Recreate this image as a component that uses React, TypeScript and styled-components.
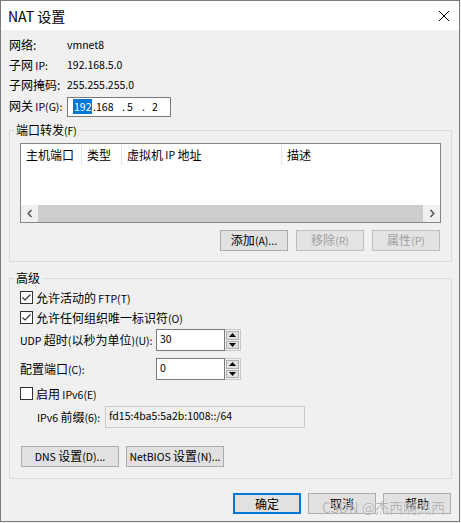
import React from "react";
import styled, { createGlobalStyle, css } from "styled-components";

const GlobalStyle = createGlobalStyle`
  html, body {
    margin: 0;
    padding: 0;
    background: #f0f0f0;
  }
  body {
    font-family: "Noto Sans CJK SC", "Noto Sans", sans-serif;
    font-size: 12px;
    color: #000;
  }
`;

/** latin runs render smaller than the CJK glyphs, like the dialog font does */
const Lat = styled.span`
  font-size: 10.5px;
`;

const LATIN = /^[\u0000-\u02ff]+$/;

const Mixed = ({ text }: { text: string }) => (
  <>
    {text
      .split(/([\u0000-\u02ff]+)/)
      .filter(Boolean)
      .map((part, i) =>
        LATIN.test(part) ? <Lat key={i}>{part}</Lat> : <React.Fragment key={i}>{part}</React.Fragment>
      )}
  </>
);

/** window frame */
const Window = styled.div`
  position: relative;
  width: 460px;
  height: 522px;
  box-sizing: border-box;
  border: 1px solid #7a7a7a;
  background: #f0f0f0;
  display: flex;
  flex-direction: column;
  overflow: hidden;
`;

const TitleBar = styled.div`
  height: 29px;
  flex: none;
  background: #fff;
  display: flex;
  align-items: center;
  justify-content: space-between;
  padding: 0 10px 0 7px;
`;

const TitleText = styled.span`
  font-size: 14px;
  line-height: 1;
`;

const Body = styled.div`
  display: flex;
  flex-direction: column;
  padding: 0 7px 0 8px;
`;

/** info rows */
const InfoList = styled.div`
  display: flex;
  flex-direction: column;
  padding-top: 5px;
`;

const Row = styled.div<{ $h?: number; $mt?: number }>`
  display: flex;
  align-items: center;
  height: ${(p) => p.$h ?? 20}px;
  margin-top: ${(p) => p.$mt ?? 0}px;
  white-space: nowrap;
`;

const Label = styled.span<{ $w: number; $pl?: number }>`
  width: ${(p) => p.$w}px;
  padding-left: ${(p) => p.$pl ?? 0}px;
  box-sizing: border-box;
  flex: none;
  line-height: 16px;
`;

const Value = styled.span`
  font-size: 10.5px;
  line-height: 16px;
`;

const IpBox = styled.div`
  width: 104px;
  height: 20px;
  box-sizing: border-box;
  border: 1px solid #7a7a7a;
  background: #fff;
  display: flex;
  align-items: center;
  padding-left: 6px;
  font-size: 10.5px;
  line-height: 14px;
`;

const IpCell = styled.span<{ $w?: number }>`
  ${(p) => (p.$w ? `width: ${p.$w}px; flex: none;` : "flex: 1;")}
`;

const Selected = styled.span`
  background: #0078d7;
  color: #fff;
  padding: 0 1px;
  margin-left: -1px;
`;

/** group boxes */
const Group = styled.fieldset<{ $mt: number }>`
  margin: ${(p) => p.$mt}px 0 0 0;
  padding: 0;
  border: 1px solid #dcdcdc;
  min-width: 0;
`;

const Legend = styled.legend`
  margin-left: 4px;
  padding: 0 2px;
  line-height: 16px;
`;

const GroupBody = styled.div<{ $pt: number; $pb: number }>`
  display: flex;
  flex-direction: column;
  padding: ${(p) => p.$pt}px 10px ${(p) => p.$pb}px 10px;
`;

/** list view */
const ListView = styled.div`
  height: 80px;
  box-sizing: border-box;
  border: 1px solid #828790;
  background: #fff;
  display: flex;
  flex-direction: column;
`;

const Header = styled.div`
  height: 21px;
  display: flex;
`;

const HeaderCell = styled.div<{ $w?: number }>`
  ${(p) => (p.$w ? `width: ${p.$w}px; flex: none;` : "flex: 1;")}
  box-sizing: border-box;
  padding-left: 5px;
  display: flex;
  align-items: center;
  white-space: pre;
  border-right: ${(p) => (p.$w ? "1px solid #e5e5e5" : "none")};
`;

const ListSpace = styled.div`
  flex: 1;
`;

const HScroll = styled.div`
  height: 17px;
  display: flex;
  background: #f0f0f0;
`;

const ScrollArrow = styled.div`
  width: 17px;
  flex: none;
  display: flex;
  align-items: center;
  justify-content: center;
`;

const ScrollThumb = styled.div`
  flex: 1;
  background: #cdcdcd;
`;

/** buttons */
const ButtonRow = styled.div<{ $mt: number; $justify?: string; $gap: number }>`
  display: flex;
  justify-content: ${(p) => p.$justify ?? "flex-end"};
  gap: ${(p) => p.$gap}px;
  margin-top: ${(p) => p.$mt}px;
  padding: 0 1px;
`;

const Button = styled.button<{ $w: number; $default?: boolean }>`
  width: ${(p) => p.$w}px;
  height: 21px;
  box-sizing: border-box;
  padding: 0;
  font: inherit;
  line-height: 16px;
  white-space: pre;
  color: #000;
  background: #e1e1e1;
  border: 1px solid #adadad;
  ${(p) =>
    p.$default &&
    css`
      border-color: #0078d7;
      box-shadow: inset 0 0 0 1px #0078d7;
    `}
  &:disabled {
    color: #a0a0a0;
    background: #e3e3e3;
    border-color: #bfbfbf;
  }
`;

/** checkboxes */
const CheckRow = styled.div<{ $mt?: number }>`
  display: flex;
  align-items: center;
  gap: 3px;
  height: 20px;
  white-space: pre;
  margin-top: ${(p) => p.$mt ?? 0}px;
`;

const Box = styled.span`
  width: 13px;
  height: 13px;
  box-sizing: border-box;
  border: 1px solid #333;
  background: #fff;
  display: flex;
  align-items: center;
  justify-content: center;
  flex: none;
`;

const CheckBox = ({ checked, label, mt }: { checked?: boolean; label: string; mt?: number }) => (
  <CheckRow $mt={mt}>
    <Box>
      {checked && (
        <svg width="11" height="11" viewBox="0 0 11 11">
          <path d="M1.5 5.5 L4 8 L9.5 2.5" fill="none" stroke="#333" strokeWidth="1.2" />
        </svg>
      )}
    </Box>
    <span>
      <Mixed text={label} />
    </span>
  </CheckRow>
);

/** spin + text fields */
const TextBox = styled.div<{ $w: number; $disabled?: boolean }>`
  width: ${(p) => p.$w}px;
  height: 100%;
  box-sizing: border-box;
  border: 1px solid ${(p) => (p.$disabled ? "#cccccc" : "#7a7a7a")};
  background: ${(p) => (p.$disabled ? "#f0f0f0" : "#fff")};
  padding: 2px 0 0 3px;
  font-size: 10.5px;
  line-height: 14px;
`;

const Spin = styled.div`
  width: 16px;
  height: 100%;
  box-sizing: border-box;
  border: 1px solid #c8c8c8;
  border-left: none;
  display: flex;
  flex-direction: column;
  gap: 1px;
  padding: 1px;
  background: #f0f0f0;
`;

const SpinHalf = styled.div`
  flex: 1;
  background: #e1e1e1;
  border: 1px solid #adadad;
  display: flex;
  align-items: center;
  justify-content: center;
`;

const SpinField = ({ value }: { value: string }) => (
  <>
    <TextBox $w={69}>{value}</TextBox>
    <Spin>
      <SpinHalf>
        <svg width="7" height="4" viewBox="0 0 7 4">
          <path d="M0 4 L3.5 0 L7 4 Z" fill="#000" />
        </svg>
      </SpinHalf>
      <SpinHalf>
        <svg width="7" height="4" viewBox="0 0 7 4">
          <path d="M0 0 L3.5 4 L7 0 Z" fill="#000" />
        </svg>
      </SpinHalf>
    </Spin>
  </>
);

const Watermark = styled.div`
  position: absolute;
  right: 14px;
  bottom: 5px;
  font-size: 14px;
  line-height: 18px;
  color: rgba(120, 120, 120, 0.55);
  text-shadow: 0 0 1px #fff;
  pointer-events: none;
`;

const App = () => {
  return (
    <>
      <GlobalStyle />
      <Window>
        <TitleBar>
          <TitleText>NAT 设置</TitleText>
          <svg width="10" height="10" viewBox="0 0 10 10">
            <path d="M0 0 L10 10 M10 0 L0 10" stroke="#000" strokeWidth="1" />
          </svg>
        </TitleBar>
        <Body>
          <InfoList>
            <Row>
              <Label $w={58}>网络:</Label>
              <Value>vmnet8</Value>
            </Row>
            <Row>
              <Label $w={58}>
                <Mixed text="子网 IP:" />
              </Label>
              <Value>192.168.5.0</Value>
            </Row>
            <Row>
              <Label $w={58}>子网掩码:</Label>
              <Value>255.255.255.0</Value>
            </Row>
            <Row $h={21} $mt={1}>
              <Label $w={58}>
                <Mixed text="网关 IP(G):" />
              </Label>
              <IpBox>
                <IpCell $w={19}>
                  <Selected>192</Selected>
                </IpCell>
                <IpCell $w={3}>.</IpCell>
                <IpCell $w={26}>168</IpCell>
                <IpCell $w={5}>.</IpCell>
                <IpCell $w={15}>5</IpCell>
                <IpCell $w={10}>.</IpCell>
                <IpCell>2</IpCell>
              </IpBox>
            </Row>
          </InfoList>

          <Group $mt={5}>
            <Legend>
              <Mixed text="端口转发(F)" />
            </Legend>
            <GroupBody $pt={4} $pb={10}>
              <ListView>
                <Header>
                  <HeaderCell $w={61}>主机端口</HeaderCell>
                  <HeaderCell $w={40}>类型</HeaderCell>
                  <HeaderCell $w={160}>
                    <Mixed text="虚拟机 IP 地址" />
                  </HeaderCell>
                  <HeaderCell>描述</HeaderCell>
                </Header>
                <ListSpace />
                <HScroll>
                  <ScrollArrow>
                    <svg width="6" height="9" viewBox="0 0 6 9">
                      <path d="M4.5 1 L1.2 4.5 L4.5 8" fill="none" stroke="#555" strokeWidth="1.5" />
                    </svg>
                  </ScrollArrow>
                  <ScrollThumb />
                  <ScrollArrow>
                    <svg width="6" height="9" viewBox="0 0 6 9">
                      <path d="M1.5 1 L4.8 4.5 L1.5 8" fill="none" stroke="#555" strokeWidth="1.5" />
                    </svg>
                  </ScrollArrow>
                </HScroll>
              </ListView>
              <ButtonRow $mt={7} $gap={8}>
                <Button $w={68}>
                  <Mixed text="添加(A)..." />
                </Button>
                <Button $w={68} disabled>
                  <Mixed text="移除(R)" />
                </Button>
                <Button $w={68} disabled>
                  <Mixed text="属性(P)" />
                </Button>
              </ButtonRow>
            </GroupBody>
          </Group>

          <Group $mt={8}>
            <Legend>高级</Legend>
            <GroupBody $pt={1} $pb={11}>
              <CheckBox checked label="允许活动的 FTP(T)" />
              <CheckBox checked label="允许任何组织唯一标识符(O)" />
              <Row $h={22} $mt={2}>
                <Label $w={136}>
                  <Mixed text="UDP 超时(以秒为单位)(U):" />
                </Label>
                <SpinField value="30" />
              </Row>
              <Row $h={22} $mt={7}>
                <Label $w={136}>
                  <Mixed text="配置端口(C):" />
                </Label>
                <SpinField value="0" />
              </Row>
              <CheckBox mt={3} label="启用 IPv6(E)" />
              <Row $h={22} $mt={3}>
                <Label $w={85} $pl={17}>
                  <Mixed text="IPv6 前缀(6):" />
                </Label>
                <TextBox $w={200} $disabled>
                  fd15:4ba5:5a2b:1008::/64
                </TextBox>
              </Row>
              <ButtonRow $mt={18} $gap={7} $justify="flex-start">
                <Button $w={98}>
                  <Mixed text="DNS 设置(D)..." />
                </Button>
                <Button $w={98}>
                  <Mixed text="NetBIOS 设置(N)..." />
                </Button>
              </ButtonRow>
            </GroupBody>
          </Group>

          <ButtonRow $mt={14} $gap={7}>
            <Button $w={68} $default>
              确定
            </Button>
            <Button $w={68}>取消</Button>
            <Button $w={68}>帮助</Button>
          </ButtonRow>
        </Body>
        <Watermark>CSDN @杰西啊杰西</Watermark>
      </Window>
    </>
  );
};

export default App;
